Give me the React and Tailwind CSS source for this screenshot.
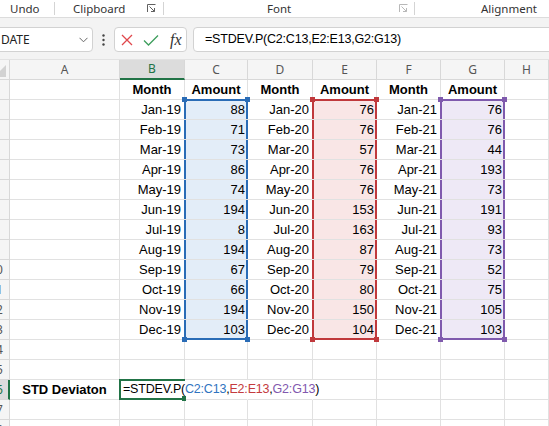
import React from "react";

const tones = {
  blue: { bg: "bg-[#e3edf8]", line: "border-[#2a6cb6]", dot: "bg-[#2a6cb6]" },
  red: { bg: "bg-[#f9e6e6]", line: "border-[#c0393c]", dot: "bg-[#c0393c]" },
  purple: { bg: "bg-[#eee9f6]", line: "border-[#7f5aad]", dot: "bg-[#7f5aad]" },
};

const data = [
  ["Jan-19", 88, "Jan-20", 76, "Jan-21", 76],
  ["Feb-19", 71, "Feb-20", 76, "Feb-21", 76],
  ["Mar-19", 73, "Mar-20", 57, "Mar-21", 44],
  ["Apr-19", 86, "Apr-20", 76, "Apr-21", 193],
  ["May-19", 74, "May-20", 76, "May-21", 73],
  ["Jun-19", 194, "Jun-20", 153, "Jun-21", 191],
  ["Jul-19", 8, "Jul-20", 163, "Jul-21", 93],
  ["Aug-19", 194, "Aug-20", 87, "Aug-21", 73],
  ["Sep-19", 67, "Sep-20", 79, "Sep-21", 52],
  ["Oct-19", 66, "Oct-20", 80, "Oct-21", 75],
  ["Nov-19", 194, "Nov-20", 150, "Nov-21", 105],
  ["Dec-19", 103, "Dec-20", 104, "Dec-21", 103],
];

const columns = ["A", "B", "C", "D", "E", "F", "G", "H"];

function Launcher({ dim }) {
  return (
    <svg width="9" height="9" viewBox="0 0 9 9" className={dim ? "text-[#b8b8b8]" : "text-[#606060]"}>
      <path d="M0.5 8V0.5H8.5" fill="none" stroke="currentColor" />
      <path d="M2.5 2.5L7.5 7.5M4 7.5H7.5V4" fill="none" stroke="currentColor" />
    </svg>
  );
}

function Ribbon() {
  return (
    <div className="flex h-[18px] border-b border-[#dcdcdc] bg-white font-['Noto_Sans',sans-serif] text-[11.5px] leading-[17px] text-[#333]">
      <div className="w-[54px] pl-[10px]">Undo</div>
      <div className="my-[2px] w-px bg-[#d4d4d4]" />
      <div className="flex w-[108px] items-center pl-[18px] pr-[7px]">
        <span>Clipboard</span>
        <span className="ml-auto flex">
          <Launcher />
        </span>
      </div>
      <div className="my-[2px] w-px bg-[#d4d4d4]" />
      <div className="flex w-[250px] items-center pl-[103px] pr-[6px]">
        <span>Font</span>
        <span className="ml-auto flex">
          <Launcher dim />
        </span>
      </div>
      <div className="my-[2px] w-px bg-[#d4d4d4]" />
      <div className="pl-[66px]">Alignment</div>
    </div>
  );
}

function FormulaBar() {
  return (
    <div className="flex h-[42px] items-start border-b border-[#e2e2e2] bg-[#f3f3f3] pt-[9px]">
      <div className="-ml-[10px] flex h-[25px] w-[103px] items-center rounded-[4px] border border-[#d2d2d2] bg-white pl-[10px] pr-[4px] font-['Noto_Sans',sans-serif] text-[12px] text-[#222]">
        <span>DATE</span>
        <svg width="9" height="6" viewBox="0 0 9 6" className="ml-auto">
          <path d="M0.5 0.8L4.5 4.8L8.5 0.8" fill="none" stroke="#666" strokeWidth="1" />
        </svg>
      </div>
      <div className="flex h-[25px] w-[21px] items-center justify-center">
        <svg width="3" height="12" viewBox="0 0 3 12">
          <circle cx="1.5" cy="1.5" r="1.2" fill="#444" />
          <circle cx="1.5" cy="6" r="1.2" fill="#444" />
          <circle cx="1.5" cy="10.5" r="1.2" fill="#444" />
        </svg>
      </div>
      <div className="flex h-[25px] w-[73px] items-center rounded-[4px] border border-[#d2d2d2] bg-white pl-[6px]">
        <svg width="12" height="12" viewBox="0 0 12 12">
          <path d="M1 1L11 11M11 1L1 11" stroke="#e0474c" strokeWidth="1.3" />
        </svg>
        <svg width="16" height="12" viewBox="0 0 16 12" className="ml-[10px]">
          <path d="M1 6.5L5.5 11L15 1.5" fill="none" stroke="#3e9e5d" strokeWidth="1.3" />
        </svg>
        <span className="ml-[11px] font-['Liberation_Serif',serif] text-[16px] italic leading-none text-[#333]">fx</span>
      </div>
      <div className="-mr-[10px] ml-[6px] flex h-[25px] flex-1 items-center rounded-[4px] border border-[#d2d2d2] bg-white pl-[11px] font-['Liberation_Sans',Arial,sans-serif] text-[12.5px] tracking-[-0.2px] text-black">
        =STDEV.P(C2:C13,E2:E13,G2:G13)
      </div>
    </div>
  );
}

function RangeMark({ tone, first, last }) {
  const t = tones[tone];
  return (
    <>
      <span
        className={`pointer-events-none absolute left-[-1px] right-[-1px] border-x-2 ${t.line} ${
          first ? "top-[-1px] border-t-2" : "top-0"
        } ${last ? "bottom-[-1px] border-b-2" : "bottom-0"}`}
      />
      {first && (
        <>
          <span className={`absolute left-[-3px] top-[-3px] h-[5px] w-[5px] ${t.dot}`} />
          <span className={`absolute right-[-3px] top-[-3px] h-[5px] w-[5px] ${t.dot}`} />
        </>
      )}
      {last && (
        <>
          <span className={`absolute bottom-[-3px] left-[-3px] h-[5px] w-[5px] ${t.dot}`} />
          <span className={`absolute bottom-[-3px] right-[-3px] h-[5px] w-[5px] ${t.dot}`} />
        </>
      )}
    </>
  );
}

function Cell({ children, head, range, first, last, noRight, pr = "pr-[3px]" }) {
  const t = range ? tones[range] : null;
  return (
    <div
      className={`flex h-[20px] items-center border-b border-[#e1e1e1] ${noRight ? "border-r border-r-transparent" : "border-r"} ${
        head ? "justify-center font-bold" : `justify-end ${pr}`
      } ${t ? `relative ${t.bg}` : ""}`}
    >
      {children}
      {range && <RangeMark tone={range} first={first} last={last} />}
    </div>
  );
}

function RowHeader({ n, active }) {
  return (
    <div
      className={`h-[20px] overflow-hidden border-b border-[#d8d8d8] font-['Noto_Sans',sans-serif] text-[12px] leading-[20px] ${
        active ? "border-r-2 border-r-[#217346] bg-[#dcdcdc] text-[#217346]" : "border-r bg-[#f5f5f5] text-[#555]"
      }`}
    >
      <div className="-ml-[24px] w-[40px] text-center">{n}</div>
    </div>
  );
}

function Editor() {
  return (
    <div className="relative flex h-[20px] items-center whitespace-nowrap border-b border-r border-[#e1e1e1] border-r-transparent">
      <span className="pointer-events-none absolute bottom-[-1px] left-[-1px] right-[-1px] top-[-1px] border-y-2 border-l-2 border-[#217346]" />
      <span className="pl-[3px] text-[12.5px] tracking-[-0.2px]">
        =STDEV.P(<span className="text-[#2f74c0]">C2:C13</span>,<span className="text-[#c43b3e]">E2:E13</span>,
        <span className="text-[#8158ae]">G2:G13</span>)
      </span>
      <span className="ml-px h-[15px] w-px bg-black" />
      <span className="absolute bottom-[-2px] right-[-2px] h-[5px] w-[4px] bg-[#217346]" />
    </div>
  );
}

function Sheet() {
  const rows = [];
  for (let r = 1; r <= 18; r++) {
    const cells = [<RowHeader key="h" n={r} active={r === 16} />];
    if (r === 1) {
      cells.push(
        <Cell key="a" />,
        <Cell key="b" head>Month</Cell>,
        <Cell key="c" head>Amount</Cell>,
        <Cell key="d" head>Month</Cell>,
        <Cell key="e" head>Amount</Cell>,
        <Cell key="f" head>Month</Cell>,
        <Cell key="g" head>Amount</Cell>,
        <Cell key="h2" />
      );
    } else if (r <= 13) {
      const [m1, v1, m2, v2, m3, v3] = data[r - 2];
      const first = r === 2;
      const last = r === 13;
      cells.push(
        <Cell key="a" />,
        <Cell key="b">{m1}</Cell>,
        <Cell key="c" range="blue" first={first} last={last} pr="pr-[2px]">{v1}</Cell>,
        <Cell key="d">{m2}</Cell>,
        <Cell key="e" range="red" first={first} last={last} pr="pr-[2px]">{v2}</Cell>,
        <Cell key="f">{m3}</Cell>,
        <Cell key="g" range="purple" first={first} last={last} pr="pr-[2px]">{v3}</Cell>,
        <Cell key="h2" />
      );
    } else if (r === 16) {
      cells.push(
        <Cell key="a" head>STD Deviaton</Cell>,
        <Editor key="b" />,
        <Cell key="c" noRight />,
        <Cell key="d" noRight />,
        <Cell key="e" />,
        <Cell key="f" />,
        <Cell key="g" />,
        <Cell key="h2" />
      );
    } else {
      columns.forEach((c) => cells.push(<Cell key={c} />));
    }
    rows.push(...cells);
  }

  return (
    <div className="grid grid-cols-[10px_110px_65px_63px_65px_64px_64px_64px_1fr] font-['Liberation_Sans',Arial,sans-serif] text-[13px] text-black">
      <div className="relative h-[20px] overflow-hidden border-b border-r border-[#d8d8d8] bg-[#f5f5f5]">
        <svg width="10" height="20" viewBox="0 0 10 20" className="absolute left-0 top-0">
          <path d="M-6 17L6 5V17Z" fill="#d2d2d2" />
        </svg>
      </div>
      {columns.map((c) => (
        <div
          key={c}
          className={`flex h-[20px] items-center justify-center border-r border-[#d8d8d8] font-['Noto_Sans',sans-serif] text-[12px] ${
            c === "B" ? "border-b-2 border-b-[#217346] bg-[#dcdcdc] text-[#217346]" : "border-b bg-[#f5f5f5] text-[#555]"
          }`}
        >
          {c}
        </div>
      ))}
      {rows}
    </div>
  );
}

export default function App() {
  return (
    <div className="h-[426px] w-[549px] overflow-hidden bg-white">
      <Ribbon />
      <FormulaBar />
      <Sheet />
    </div>
  );
}
